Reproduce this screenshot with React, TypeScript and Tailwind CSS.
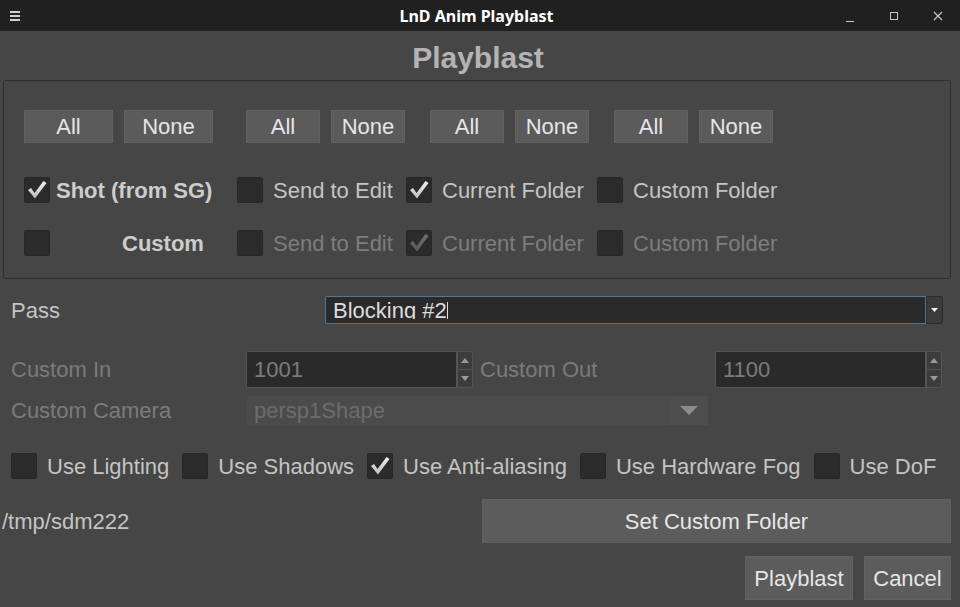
import React from 'react';

type CheckProps = { checked?: boolean; disabled?: boolean };

const CheckBox = ({ checked = false, disabled = false }: CheckProps) => (
  <span className="w-[26px] h-[26px] shrink-0 bg-[#2b2b2b] border border-[#272727] rounded-[2px] flex items-center justify-center">
    {checked && (
      <svg width="22" height="22" viewBox="0 0 22 22">
        <defs>
          <linearGradient id={disabled ? 'ckd' : 'cke'} x1="0" y1="0" x2="0" y2="1">
            <stop offset="0" stopColor={disabled ? '#707070' : '#f2f2f2'} />
            <stop offset="1" stopColor={disabled ? '#5a5a5a' : '#bdbdbd'} />
          </linearGradient>
        </defs>
        <polygon
          points="2,11 5,9 8.5,14 17.5,2 20.5,4 9,19.5"
          fill={`url(#${disabled ? 'ckd' : 'cke'})`}
        />
      </svg>
    )}
  </span>
);

const Btn = ({ label, w }: { label: string; w: string }) => (
  <div
    className={`${w} h-full bg-[#5b5b5b] border border-[#616161] flex items-center justify-center text-[22px] text-[#e6e6e6]`}
  >
    {label}
  </div>
);

const SpinBox = ({ value }: { value: string }) => (
  <div className="w-[227px] h-full flex">
    <div className="flex-1 h-full bg-[#2a2a2a] border border-[#545454] rounded-l-[2px] flex items-center pl-[7px] text-[22px] text-[#7c7c7c]">
      {value}
    </div>
    <div className="w-[16px] h-full flex flex-col">
      <div className="flex-1 bg-[#3c3c3c] border border-[#545454] rounded-tr-[3px] flex items-center justify-center">
        <svg width="8" height="5" viewBox="0 0 8 5">
          <polygon points="0,5 8,5 4,0" fill="#9a9a9a" />
        </svg>
      </div>
      <div className="flex-1 bg-[#3c3c3c] border border-t-0 border-[#545454] rounded-br-[3px] flex items-center justify-center">
        <svg width="8" height="5" viewBox="0 0 8 5">
          <polygon points="0,0 8,0 4,5" fill="#9a9a9a" />
        </svg>
      </div>
    </div>
  </div>
);

const UseOpt = ({ label, checked }: { label: string; checked?: boolean }) => (
  <div className="flex items-center mr-[13px]">
    <CheckBox checked={checked} />
    <span className="ml-[10px] text-[22px] text-[#c4c4c4] whitespace-nowrap">{label}</span>
  </div>
);

export default function App() {
  return (
    <div className="w-[960px] h-[607px] bg-[#464646] flex flex-col overflow-hidden font-['Liberation_Sans',Arial,sans-serif]">
      {/* title bar */}
      <div className="h-[31px] bg-[#202020] grid grid-cols-[1fr_auto_1fr] items-center">
        <div className="pl-[10px] flex flex-col gap-[2px] w-fit">
          <span className="block w-[10px] h-[2px] bg-[#d0d0d0]" />
          <span className="block w-[10px] h-[2px] bg-[#d0d0d0]" />
          <span className="block w-[10px] h-[2px] bg-[#d0d0d0]" />
        </div>
        <div className="pr-[7px] font-['Noto_Sans',sans-serif] font-bold text-[16px] text-white">
          LnD Anim Playblast
        </div>
        <div className="flex justify-end items-center pr-[17px]">
          <svg width="10" height="10" viewBox="0 0 10 10" className="mr-[34px] mt-[4px]">
            <line x1="1" y1="8.5" x2="9" y2="8.5" stroke="#c8c8c8" strokeWidth="1" />
          </svg>
          <svg width="10" height="10" viewBox="0 0 10 10" className="mr-[34px]">
            <rect x="1.5" y="1.5" width="7" height="7" fill="none" stroke="#c8c8c8" strokeWidth="1" />
          </svg>
          <svg width="10" height="10" viewBox="0 0 10 10">
            <path d="M1 1 L9 9 M9 1 L1 9" stroke="#c8c8c8" strokeWidth="1.2" />
          </svg>
        </div>
      </div>

      {/* header */}
      <div className="h-[49px] pt-[4px] flex items-center justify-center">
        <span className="text-[30px] font-bold text-[#b4b4b4] pr-[4px]">Playblast</span>
      </div>

      {/* output group */}
      <div className="ml-[3px] w-[948px] h-[199px] border border-[#2f2f2f] rounded-[3px] pl-[20px] pt-[29px] flex flex-col">
        <div className="h-[33px] flex">
          <div className="flex gap-[11px]">
            <Btn label="All" w="w-[89px]" />
            <Btn label="None" w="w-[89px]" />
          </div>
          <div className="flex gap-[11px] ml-[33px]">
            <Btn label="All" w="w-[74px]" />
            <Btn label="None" w="w-[74px]" />
          </div>
          <div className="flex gap-[11px] ml-[25px]">
            <Btn label="All" w="w-[74px]" />
            <Btn label="None" w="w-[74px]" />
          </div>
          <div className="flex gap-[11px] ml-[25px]">
            <Btn label="All" w="w-[74px]" />
            <Btn label="None" w="w-[74px]" />
          </div>
        </div>

        <div className="mt-[34px] h-[26px] flex items-center text-[22px] whitespace-nowrap">
          <div className="w-[213px] flex items-center">
            <CheckBox checked />
            <span className="ml-[6px] font-bold text-[#cdcdcd]">Shot (from SG)</span>
          </div>
          <div className="w-[169px] flex items-center">
            <CheckBox />
            <span className="ml-[10px] text-[#c4c4c4]">Send to Edit</span>
          </div>
          <div className="w-[191px] flex items-center">
            <CheckBox checked />
            <span className="ml-[10px] text-[#c4c4c4]">Current Folder</span>
          </div>
          <div className="flex items-center">
            <CheckBox />
            <span className="ml-[10px] text-[#c4c4c4]">Custom Folder</span>
          </div>
        </div>

        <div className="mt-[27px] h-[26px] flex items-center text-[22px] whitespace-nowrap">
          <div className="w-[213px] flex items-center">
            <CheckBox />
            <span className="ml-[72px] font-bold text-[#cdcdcd]">Custom</span>
          </div>
          <div className="w-[169px] flex items-center">
            <CheckBox />
            <span className="ml-[10px] text-[#7d7d7d]">Send to Edit</span>
          </div>
          <div className="w-[191px] flex items-center">
            <CheckBox checked disabled />
            <span className="ml-[10px] text-[#7d7d7d]">Current Folder</span>
          </div>
          <div className="flex items-center">
            <CheckBox />
            <span className="ml-[10px] text-[#7d7d7d]">Custom Folder</span>
          </div>
        </div>
      </div>

      {/* pass */}
      <div className="mt-[17px] h-[28px] flex items-center text-[22px]">
        <div className="w-[325px] pl-[11px] text-[#c4c4c4]">Pass</div>
        <div className="w-[601px] h-full bg-[#2a2a2a] border border-[#4d7898] rounded-l-[2px] pl-[7px]">
          <div className="h-[22px] overflow-hidden pt-[3px]">
            <div className="leading-[22px] text-[#dcdcdc] flex items-start">
              <span>Blocking #2</span>
              <span className="block w-px h-[20px] mt-[2px] bg-[#dcdcdc]" />
            </div>
          </div>
        </div>
        <div className="w-[17px] h-full bg-[#3b3b3b] border border-[#2b2b2b] rounded-r-[3px] flex items-center justify-center">
          <svg width="7" height="4" viewBox="0 0 7 4">
            <polygon points="0,0 7,0 3.5,4" fill="#f0f0f0" />
          </svg>
        </div>
      </div>

      {/* custom in/out */}
      <div className="mt-[27px] h-[37px] flex items-center text-[22px] text-[#7b7b7b]">
        <div className="w-[246px] pl-[11px]">Custom In</div>
        <SpinBox value="1001" />
        <div className="w-[242px] pl-[7px]">Custom Out</div>
        <SpinBox value="1100" />
      </div>

      {/* camera */}
      <div className="mt-[8px] h-[29px] flex items-center text-[22px] text-[#7b7b7b]">
        <div className="w-[247px] pl-[11px]">Custom Camera</div>
        <div className="w-[461px] h-full bg-[#4b4b4b] rounded-[2px] flex items-center">
          <span className="flex-1 pl-[7px] text-[#6c6c6c]">persp1Shape</span>
          <div className="w-[38px] h-full bg-[#4d4d4d] flex items-center justify-center">
            <svg width="18" height="9" viewBox="0 0 18 9">
              <polygon points="0,0 18,0 9,9" fill="#8c8c8c" />
            </svg>
          </div>
        </div>
      </div>

      {/* options */}
      <div className="mt-[28px] h-[26px] pl-[11px] flex items-center">
        <UseOpt label="Use Lighting" />
        <UseOpt label="Use Shadows" />
        <UseOpt label="Use Anti-aliasing" checked />
        <UseOpt label="Use Hardware Fog" />
        <UseOpt label="Use DoF" />
      </div>

      {/* folder */}
      <div className="mt-[20px] h-[44px] flex items-center text-[22px]">
        <div className="flex-1 pl-[2px] text-[#c4c4c4]">/tmp/sdm222</div>
        <div className="mr-[9px]">
          <div className="w-[469px] h-[44px] bg-[#5c5c5c] border border-[#616161] flex items-center justify-center text-[#e6e6e6]">
            Set Custom Folder
          </div>
        </div>
      </div>

      <div className="mt-[13px] h-[44px] pr-[9px] flex justify-end gap-[11px] text-[22px] text-[#e6e6e6]">
        <div className="w-[108px] h-full bg-[#5c5c5c] border border-[#616161] flex items-center justify-center">
          Playblast
        </div>
        <div className="w-[87px] h-full bg-[#5c5c5c] border border-[#616161] flex items-center justify-center">
          Cancel
        </div>
      </div>
    </div>
  );
}
